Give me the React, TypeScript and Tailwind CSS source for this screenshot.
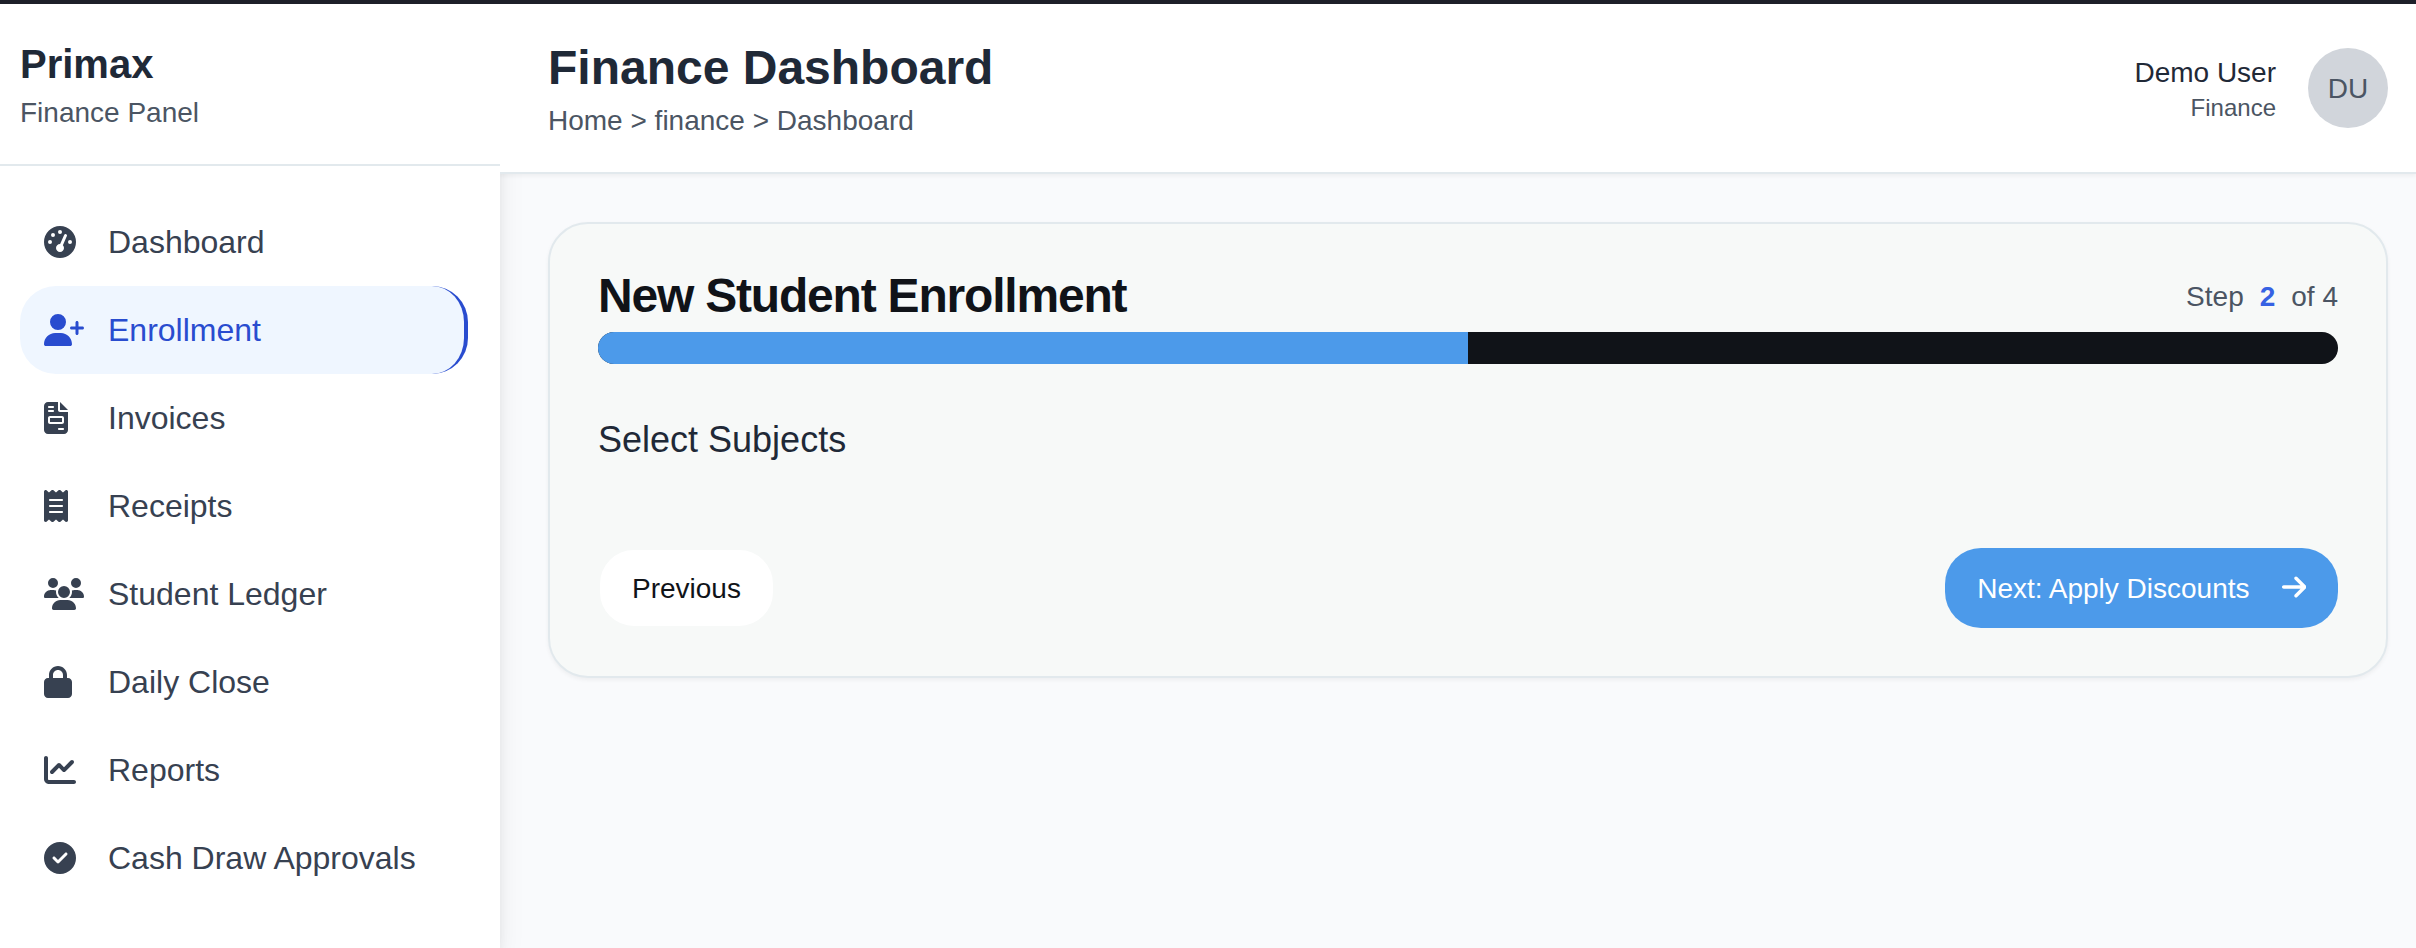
import {
  FaGaugeHigh,
  FaUserPlus,
  FaFileInvoice,
  FaReceipt,
  FaUsers,
  FaLock,
  FaChartLine,
  FaCircleCheck,
  FaArrowRight,
} from "react-icons/fa6";
import type { IconType } from "react-icons";

const navItems: { label: string; icon: IconType; size: string; active?: boolean }[] = [
  { label: "Dashboard", icon: FaGaugeHigh, size: "h-8 w-8" },
  { label: "Enrollment", icon: FaUserPlus, size: "h-8 w-10", active: true },
  { label: "Invoices", icon: FaFileInvoice, size: "h-8 w-6" },
  { label: "Receipts", icon: FaReceipt, size: "h-8 w-6" },
  { label: "Student Ledger", icon: FaUsers, size: "h-8 w-10" },
  { label: "Daily Close", icon: FaLock, size: "h-8 w-7" },
  { label: "Reports", icon: FaChartLine, size: "h-8 w-8" },
  { label: "Cash Draw Approvals", icon: FaCircleCheck, size: "h-8 w-8" },
];

function Sidebar() {
  return (
    <aside className="z-10 flex w-[500px] shrink-0 flex-col bg-white shadow-[0_20px_30px_-6px_rgba(0,0,0,0.1),0_8px_12px_-4px_rgba(0,0,0,0.1)]">
      <div className="border-b-2 border-[#e2e9ed] px-5 py-8">
        <h2 className="text-[40px] leading-[56px] font-bold text-[#1f2937]">Primax</h2>
        <p className="-mb-0.5 text-[28px] leading-[42px] text-[#4b5563]">Finance Panel</p>
      </div>
      <nav className="flex flex-col py-8 pr-8 pl-5">
        {navItems.map(({ label, icon: Icon, size, active }) => (
          <a
            key={label}
            className={
              active
                ? "flex h-[88px] items-center rounded-[36px] border-r-4 border-[#294ccf] bg-[#eff6ff] px-6 text-[#294ccf]"
                : "flex h-[88px] items-center rounded-[36px] px-6 text-[#374151]"
            }
          >
            <span className="mr-6 flex w-10 shrink-0">
              <Icon className={size} />
            </span>
            <span className="text-[32px] leading-[48px] whitespace-nowrap">{label}</span>
          </a>
        ))}
      </nav>
    </aside>
  );
}

function Header() {
  return (
    <header className="z-20 flex items-center justify-between border-b-2 border-[#e2e9ed] bg-white py-8 pr-7 pl-12 shadow-[0_2px_4px_0_rgba(0,0,0,0.05)]">
      <div>
        <h1 className="text-[48px] leading-[64px] font-bold text-[#1f2937]">Finance Dashboard</h1>
        <p className="-mb-0.5 text-[28px] leading-[42px] text-[#4b5563]">Home &gt; finance &gt; Dashboard</p>
      </div>
      <div className="flex items-center gap-8">
        <div className="text-right">
          <p className="-mb-0.5 text-[28px] leading-[42px] text-[#1f2937]">Demo User</p>
          <p className="text-2xl leading-8 text-[#4b5563]">Finance</p>
        </div>
        <div className="flex size-20 items-center justify-center rounded-full bg-[#d1d5db] pt-0.5 text-[28px] leading-10 text-[#4b5563]">
          DU
        </div>
      </div>
    </header>
  );
}

function EnrollmentCard() {
  return (
    <section className="rounded-[40px] border-2 border-[#e2e9ed] bg-[#f7f9f8] p-12 shadow-[0_2px_4px_0_rgba(0,0,0,0.05)]">
      <div className="flex items-center justify-between">
        <h2 className="text-5xl leading-none font-bold tracking-tight text-[#101318]">New Student Enrollment</h2>
        <div className="flex gap-4 pt-0.5 text-[28px] leading-10 text-[#4b5563]">
          <span>Step</span>
          <span className="font-bold text-[#3662e3]">2</span>
          <span>of 4</span>
        </div>
      </div>
      <div className="mt-3 h-8 overflow-hidden rounded-full bg-[#101318]">
        <div className="h-full w-1/2 bg-[#4c9aea]" />
      </div>
      <h3 className="mt-12 text-4xl leading-[56px] text-[#1f2937]">Select Subjects</h3>
      <div className="mt-20 flex items-center justify-between">
        <button className="h-20 rounded-[36px] border-2 border-[#f7f9f8] bg-white px-[32px] pt-0.5 text-[28px] leading-10 text-[#101318]">
          Previous
        </button>
        <button className="flex h-20 items-center gap-8 rounded-[36px] bg-[#4c9aea] px-8 text-[28px] leading-10 text-white">
          <span className="pt-0.5">Next: Apply Discounts</span>
          <FaArrowRight className="-mt-0.5 h-7 w-[24.5px]" />
        </button>
      </div>
    </section>
  );
}

export default function App() {
  return (
    <div className="flex h-[948px] w-full overflow-hidden border-t-4 border-[#1d1f29] bg-[#f9fafc] font-['Liberation_Sans',Arial,sans-serif]">
      <Sidebar />
      <div className="flex min-w-0 flex-1 flex-col overflow-hidden">
        <Header />
        <main className="flex-1 pt-12 pr-7 pl-12">
          <EnrollmentCard />
        </main>
      </div>
    </div>
  );
}
